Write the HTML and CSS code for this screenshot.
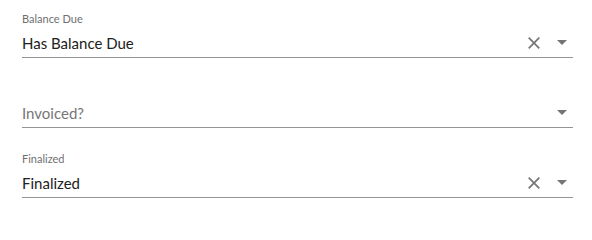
FILE: index.html
```html
<!DOCTYPE html>
<html lang="en">
<head>
<meta charset="utf-8">
<title>Filters</title>
<link rel="stylesheet" href="styles.css">
</head>
<body>
<div class="form">
  <div class="field">
    <div class="label">Balance Due</div>
    <div class="row">
      <span class="value">Has Balance Due</span>
      <svg class="clear" width="12" height="12" viewBox="0 0 12 12"><path d="M0.7 0.7 L11.3 11.3 M11.3 0.7 L0.7 11.3" stroke="currentColor" stroke-width="1.7" fill="none"/></svg>
      <svg class="arrow" width="10" height="5" viewBox="0 0 10 5"><path d="M0 0 L10 0 L5 5 Z" fill="currentColor"/></svg>
    </div>
  </div>
  <div class="field">
    <div class="label"></div>
    <div class="row">
      <span class="value placeholder">Invoiced?</span>
      <svg class="arrow" width="10" height="5" viewBox="0 0 10 5"><path d="M0 0 L10 0 L5 5 Z" fill="currentColor"/></svg>
    </div>
  </div>
  <div class="field">
    <div class="label">Finalized</div>
    <div class="row">
      <span class="value">Finalized</span>
      <svg class="clear" width="12" height="12" viewBox="0 0 12 12"><path d="M0.7 0.7 L11.3 11.3 M11.3 0.7 L0.7 11.3" stroke="currentColor" stroke-width="1.7" fill="none"/></svg>
      <svg class="arrow" width="10" height="5" viewBox="0 0 10 5"><path d="M0 0 L10 0 L5 5 Z" fill="currentColor"/></svg>
    </div>
  </div>
</div>
</body>
</html>
```
FILE: styles.css
```css
html, body {
  margin: 0;
  padding: 0;
  background: #ffffff;
}
body {
  font-family: Lato, "Noto Sans", sans-serif;
}
.form {
  padding: 0 19px 0 22px;
}
.field {
  padding-top: 12px;
  box-sizing: border-box;
  border-bottom: 1px solid #949494;
  margin-bottom: 12px;
  height: 58px;
  display: flex;
  flex-direction: column;
}
.label {
  height: 14px;
  line-height: 14px;
  font-size: 11px;
  color: #6f6f6f;
  margin-bottom: 7px;
}
.row {
  height: 20px;
  display: flex;
  align-items: center;
}
.value {
  flex: 1;
  font-size: 15px;
  line-height: 20px;
  color: #212121;
}
.placeholder {
  color: #767676;
}
.clear {
  color: #757575;
  margin-right: 17px;
}
.arrow {
  color: #757575;
  margin-right: 6px;
  margin-top: -1px;
}
```
